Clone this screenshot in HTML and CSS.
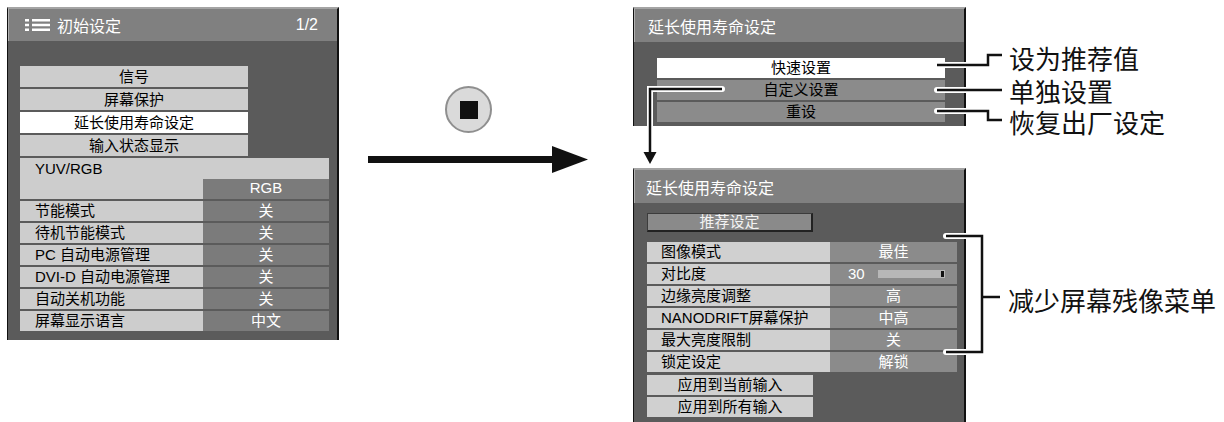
FILE: index.html
```html
<!DOCTYPE html>
<html lang="zh-CN">
<head>
  <meta charset="UTF-8">
  <title>延长使用寿命设定</title>
  <link rel="stylesheet" href="styles.css">
</head>
<body>
  <div class="stage">

    <section class="osd osd-main">
      <header class="osd-head">
        <svg class="menu-icon" width="25" height="12" viewBox="0 0 25 12">
          <rect x="0" y="0" width="4" height="2.5" fill="#fff"/>
          <rect x="0" y="4.75" width="4" height="2.5" fill="#fff"/>
          <rect x="0" y="9.5" width="4" height="2.5" fill="#fff"/>
          <rect x="7" y="0" width="18" height="2.5" fill="#fff"/>
          <rect x="7" y="4.75" width="18" height="2.5" fill="#fff"/>
          <rect x="7" y="9.5" width="18" height="2.5" fill="#fff"/>
        </svg>
        <span class="osd-title">初始设定</span>
        <span class="osd-page">1/2</span>
      </header>
      <div class="osd-body main-body">
        <ul class="menu-list">
          <li>信号</li>
          <li>屏幕保护</li>
          <li class="selected">延长使用寿命设定</li>
          <li>输入状态显示</li>
        </ul>
        <div class="yuv">
          <span class="yuv-label">YUV/RGB</span>
          <span class="val">RGB</span>
        </div>
        <div class="setting"><span class="label">节能模式</span><span class="val">关</span></div>
        <div class="setting"><span class="label">待机节能模式</span><span class="val">关</span></div>
        <div class="setting"><span class="label">PC 自动电源管理</span><span class="val">关</span></div>
        <div class="setting"><span class="label">DVI-D 自动电源管理</span><span class="val">关</span></div>
        <div class="setting"><span class="label">自动关机功能</span><span class="val">关</span></div>
        <div class="setting"><span class="label">屏幕显示语言</span><span class="val">中文</span></div>
      </div>
    </section>

    <div class="stop-btn"><span class="stop-square"></span></div>

    <section class="osd osd-quick">
      <header class="osd-head"><span class="osd-title">延长使用寿命设定</span></header>
      <div class="osd-body quick-body">
        <div class="quick-row selected">快速设置</div>
        <div class="quick-row">自定义设置</div>
        <div class="quick-row">重设</div>
      </div>
    </section>

    <section class="osd osd-life">
      <header class="osd-head"><span class="osd-title">延长使用寿命设定</span></header>
      <div class="osd-body life-body">
        <div class="recommend-btn">推荐设定</div>
        <div class="life-list">
          <div class="setting"><span class="label">图像模式</span><span class="val">最佳</span></div>
          <div class="setting">
            <span class="label">对比度</span>
            <span class="val val-slider">
              <span class="slider-num">30</span>
              <span class="slider"><span class="slider-knob"></span></span>
            </span>
          </div>
          <div class="setting"><span class="label">边缘亮度调整</span><span class="val">高</span></div>
          <div class="setting"><span class="label">NANODRIFT屏幕保护</span><span class="val">中高</span></div>
          <div class="setting"><span class="label">最大亮度限制</span><span class="val">关</span></div>
          <div class="setting"><span class="label">锁定设定</span><span class="val">解锁</span></div>
        </div>
        <div class="apply-list">
          <div class="apply-btn">应用到当前输入</div>
          <div class="apply-btn">应用到所有输入</div>
        </div>
      </div>
    </section>

    <svg class="lines" width="1224" height="422" viewBox="0 0 1224 422">
      <g fill="none" stroke="#fff" stroke-width="6" stroke-linecap="round">
        <path d="M937 65 H988 V55 H1002"/>
        <path d="M937 90 H1002"/>
        <path d="M937 111 H988 V120 H1002"/>
        <path d="M722 89 H650 V152"/>
        <path d="M946 236 H982 V352 H946"/>
      </g>
      <g fill="none" stroke="#111" stroke-width="2.5">
        <path d="M937 65 H988 V55 H1002"/>
        <path d="M937 90 H1002"/>
        <path d="M937 111 H988 V120 H1002"/>
        <path d="M722 89 H650 V153"/>
        <path d="M946 236 H982 V352 H946"/>
        <path d="M982 297 H1000"/>
      </g>
      <polygon points="643.5,152 656.5,152 650,164" fill="#111"/>
      <rect x="368" y="156" width="186" height="7" fill="#111"/>
      <polygon points="552,146 588,159.5 552,173" fill="#111"/>
    </svg>

    <span class="callout c-quick">设为推荐值</span>
    <span class="callout c-custom">单独设置</span>
    <span class="callout c-reset">恢复出厂设定</span>
    <span class="callout c-menu">减少屏幕残像菜单</span>

  </div>
</body>
</html>
```

FILE: styles.css
```css
body {
  margin: 0;
  background: #fff;
  font-family: "Liberation Sans", "Noto Sans CJK SC", sans-serif;
}
.stage {
  position: relative;
  width: 1224px;
  height: 422px;
  overflow: hidden;
}

/* OSD panels */
.osd {
  position: absolute;
  box-sizing: border-box;
  background: #5b5b5b;
  border-top: 2px solid #a4a4a4;
  border-left: 1px solid #111;
  border-right: 2px solid #111;
  overflow: hidden;
  font-size: 15px;
}
.osd-head {
  display: flex;
  align-items: center;
  height: 32px;
  background: #808080;
  color: #fff;
  font-size: 16px;
  box-shadow: inset 1px 0 #b0b0b0;
}
.osd-title {
  flex: 1;
}
.osd-body {
  display: flex;
  flex-direction: column;
  gap: 2px;
}

.osd-main {
  left: 7px;
  top: 7px;
  width: 332px;
  height: 333px;
}
.osd-main .osd-head {
  padding: 0 19px 0 17px;
}
.menu-icon {
  margin-right: 7px;
}
.main-body {
  padding: 25px 8px 9px 12px;
}
.menu-list {
  list-style: none;
  margin: 0;
  padding: 0;
  width: 228px;
  display: flex;
  flex-direction: column;
  gap: 2px;
}
.menu-list li {
  height: 21px;
  line-height: 21px;
  text-align: center;
  background: #cdcdcd;
  color: #000;
}
.menu-list li.selected,
.quick-row.selected {
  background: #fff;
}
.yuv {
  display: grid;
  grid-template-rows: 21px 20px;
  background: #cdcdcd;
}
.yuv-label {
  padding-left: 15px;
  line-height: 21px;
}
.yuv .val {
  justify-self: end;
}

.setting {
  display: flex;
  height: 20px;
  line-height: 20px;
}
.setting .label {
  flex: 1;
  background: #cdcdcd;
  color: #000;
  padding-left: 15px;
  white-space: nowrap;
}
.val {
  width: 126px;
  text-align: center;
  background: #7b7b7b;
  color: #fff;
}

/* quick settings panel */
.osd-quick {
  left: 633px;
  top: 7px;
  width: 333px;
  height: 119px;
}
.osd-quick .osd-head,
.osd-life .osd-head {
  height: 33px;
  padding-left: 14px;
}
.quick-body {
  padding: 16px 19px 0 23px;
}
.quick-row {
  height: 20px;
  line-height: 20px;
  text-align: center;
  background: #8b8b8b;
  color: #000;
}

/* life settings panel */
.osd-life {
  left: 633px;
  top: 168px;
  width: 333px;
  height: 262px;
}
.osd-life .osd-head {
  padding-left: 12px;
}
.life-body {
  padding: 10px 0 0 13px;
  gap: 0;
}
.recommend-btn {
  box-sizing: border-box;
  width: 166px;
  height: 19px;
  line-height: 16px;
  text-align: center;
  color: #f2f2f2;
  background: #8a8a8a;
  border: 1px solid #3c3c3c;
  border-right: 2px solid #222;
  border-bottom: 2px solid #222;
  margin-bottom: 10px;
}
.life-list {
  width: 310px;
  display: flex;
  flex-direction: column;
  gap: 2px;
}
.life-list .setting .label {
  padding-left: 14px;
  background: #d0d0d0;
}
.life-list .val {
  width: 127px;
  background: #8b8b8b;
}
.val-slider {
  display: flex;
  align-items: center;
  box-sizing: border-box;
  padding-left: 18px;
  gap: 13px;
  text-align: left;
}
.slider {
  display: flex;
  justify-content: flex-end;
  width: 67px;
  height: 8px;
  background: #b7b7b7;
}
.slider-knob {
  width: 3px;
  height: 6px;
  margin: 1px 1px 0 0;
  background: #111;
}
.apply-list {
  display: flex;
  flex-direction: column;
  gap: 2px;
  margin-top: 3px;
}
.apply-btn {
  width: 166px;
  height: 20px;
  line-height: 20px;
  text-align: center;
  background: #d0d0d0;
  color: #000;
}

/* stop button */
.stop-btn {
  position: absolute;
  left: 445px;
  top: 86px;
  width: 47px;
  height: 47px;
  box-sizing: border-box;
  border-radius: 50%;
  border: 2px solid #8f8f8f;
  background: #dadada;
  display: flex;
  align-items: center;
  justify-content: center;
}
.stop-square {
  width: 18px;
  height: 18px;
  background: #111;
}

/* callout lines and labels */
.lines {
  position: absolute;
  left: 0;
  top: 0;
}
.callout {
  position: absolute;
  display: block;
  left: 1009px;
  height: 26px;
  font-family: "Liberation Sans", "Noto Sans CJK SC", sans-serif;
  font-size: 26px;
  line-height: 26px;
  color: #111;
  white-space: nowrap;
}
.c-quick { top: 47px; }
.c-custom { top: 80px; }
.c-reset { top: 111px; }
.c-menu { top: 289px; left: 1008px; }
```
